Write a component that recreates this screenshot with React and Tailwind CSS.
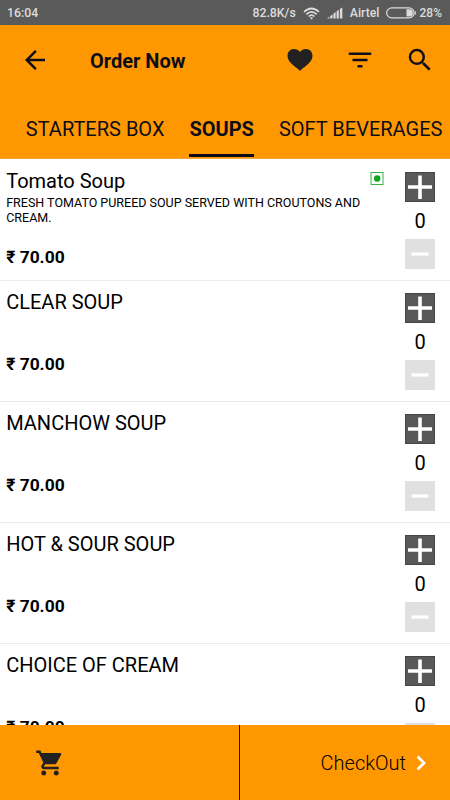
import React from 'react'
import {
  MdArrowBack,
  MdFilterList,
  MdSearch,
  MdShoppingCart,
} from 'react-icons/md'

const tabs = [
  { name: 'STARTERS BOX' },
  { name: 'SOUPS', active: true },
  { name: 'SOFT BEVERAGES' },
]

const items = [
  {
    name: 'Tomato Soup',
    description: 'FRESH TOMATO PUREED SOUP SERVED WITH CROUTONS AND CREAM.',
    price: '70.00',
    veg: true,
  },
  { name: 'CLEAR SOUP', price: '70.00' },
  { name: 'MANCHOW SOUP', price: '70.00' },
  { name: 'HOT & SOUR SOUP', price: '70.00' },
  { name: 'CHOICE OF CREAM', price: '70.00' },
]

const StatusBar = () => {
  return (
    <div className="h-[25px] shrink-0 bg-[#5a5a5a] border-b border-[#4a5a60] text-[#dcdcdc] text-[12.3px] font-medium flex items-center pl-[7px] pr-[8px] pt-[2px] leading-none">
      <span>16:04</span>
      <span className="ml-auto">82.8K/s</span>
      <svg className="ml-[7px]" width="17" height="13" viewBox="0 0 17 13" fill="none" stroke="#dcdcdc" strokeWidth="1.7">
        <path d="M1 5 Q8.5 -2 16 5" />
        <path d="M3.3 7.3 Q8.5 2.5 13.7 7.3" />
        <path d="M5.6 9.5 Q8.5 6.8 11.4 9.5" />
        <path d="M8.5 12.6 L6.8 10.8 Q8.5 9.6 10.2 10.8 Z" fill="#dcdcdc" stroke="none" />
      </svg>
      <svg className="ml-[7px]" width="16" height="12" viewBox="0 0 16 12" fill="#dcdcdc">
        <path d="M0 11.5 L2.4 9.7 V11.5 Z" />
        <path d="M3.3 11.5 V9 L5.5 7.4 V11.5 Z" />
        <path d="M6.4 11.5 V6.7 L8.6 5.1 V11.5 Z" />
        <path d="M9.6 11.5 V4.4 L11.8 2.8 V11.5 Z" />
        <path d="M12.9 11.5 V2 L15.3 0.6 V11.5 Z" />
      </svg>
      <span className="ml-[7px]">Airtel</span>
      <svg className="ml-[6px]" width="31" height="12" viewBox="0 0 31 12">
        <rect x="0.7" y="0.9" width="27.4" height="10" rx="5" fill="none" stroke="#dcdcdc" strokeWidth="1.2" />
        <path d="M20.5 2.2 H23.2 A3.7 3.7 0 0 1 23.2 9.6 H20.5 Z" fill="#dcdcdc" />
        <path d="M28.8 3.5 Q31.2 6 28.8 8.5 Z" fill="#dcdcdc" />
      </svg>
      <span className="ml-[3px] text-[12px]">28%</span>
    </div>
  )
}

const Header = () => {
  return (
    <div className="h-[70px] shrink-0 flex items-center pl-[20px] pr-[15px]">
      <MdArrowBack size={30} />
      <h1 className="ml-[40px] pt-px text-[20px] font-bold">Order Now</h1>
      <div className="ml-auto flex gap-[30px]">
        <svg width="30" height="30" viewBox="0 0 30 30" fill="#212121">
          <path d="M15 26 C12 22 2.5 18 2.5 10.9 C2.5 6.9 5.2 4 8.8 4 C11.6 4 13.8 5.2 15 6.9 C16.2 5.2 18.4 4 21.2 4 C24.8 4 27.5 6.9 27.5 10.9 C27.5 18 18 22 15 26 Z" />
        </svg>
        <MdFilterList size={30} />
        <MdSearch size={30} />
      </div>
    </div>
  )
}

const Tabs = () => {
  return (
    <div className="h-[64px] shrink-0 flex pl-[25.8px] gap-[25px] whitespace-nowrap overflow-hidden border-b border-[#f5a63a]">
      {tabs.map((tab) => (
        <div key={tab.name} className="flex flex-col shrink-0">
          <span className={tab.active ? 'pt-[20px] h-[59px] text-[20px] leading-[28px] font-bold' : 'pt-[20px] h-[59px] text-[20px] leading-[28px]'}>
            {tab.name}
          </span>
          {tab.active && <div className="h-[3px] bg-[#0d0d1a]" />}
        </div>
      ))}
    </div>
  )
}

const Quantity = () => {
  return (
    <div className="w-[30px] flex flex-col items-center">
      <button className="block">
        <svg width="30" height="30" viewBox="0 0 30 30">
          <rect x="0.5" y="0.5" width="29" height="29" fill="#595959" stroke="#454545" />
          <path d="M15 3.5 V27 M3 15 H27" stroke="#fff" strokeWidth="3.6" />
        </svg>
      </button>
      <span className="h-[37px] leading-[38px] text-[20px]">0</span>
      <button className="block">
        <svg width="30" height="30" viewBox="0 0 30 30">
          <rect width="30" height="30" fill="#e0e0e0" />
          <path d="M6.5 15 H23.5" stroke="#fff" strokeWidth="3.2" />
        </svg>
      </button>
    </div>
  )
}

const MenuItem = ({ item }) => {
  return (
    <div className="h-[121.1px] shrink-0 border-b border-[#ebebeb] pl-[6.2px] pr-[15px] pt-[12px] flex">
      <div className="w-[364px] flex flex-col -mt-[4px]">
        <h2 className="text-[20px] leading-[26px]">{item.name}</h2>
        {item.description && (
          <p className="text-[12.5px] leading-[15px] mt-px">{item.description}</p>
        )}
        <p className={item.description ? 'mt-[20px] text-[17.4px] leading-[24px] font-bold' : 'mt-[37px] text-[17.4px] leading-[24px] font-bold'}>
          ₹ {item.price}
        </p>
      </div>
      <div className="w-[14px] -mt-px">
        {item.veg && (
          <svg width="14" height="14" viewBox="0 0 14 14">
            <rect x="1" y="1.5" width="12" height="12" fill="#fff" stroke="#35b544" />
            <circle cx="7.2" cy="7.5" r="3.2" fill="#0ca51c" />
          </svg>
        )}
      </div>
      <div className="ml-auto">
        <Quantity />
      </div>
    </div>
  )
}

const BottomBar = () => {
  return (
    <div className="h-[75px] shrink-0 bg-[#ff9800] flex">
      <div className="w-[240px] border-r border-[#1f1a10] flex items-center pl-[34.5px]">
        <MdShoppingCart size={30} className="text-[#212121]" />
      </div>
      <div className="flex-1 flex items-center justify-end pr-[14px]">
        <span className="pt-px text-[20px] font-light">CheckOut</span>
        <svg width="30" height="30" viewBox="0 0 30 30" fill="none" stroke="#fff" strokeWidth="2.8">
          <path d="M11.6 8.6 L18 15 L11.6 21.4" />
        </svg>
      </div>
    </div>
  )
}

const App = () => {
  return (
    <div className="w-[450px] h-[800px] overflow-hidden bg-white text-black flex flex-col font-[Roboto,sans-serif]">
      <StatusBar />

      {/* APP BAR WITH CATEGORY TABS */}
      <div className="bg-[#ff9800] text-[#0d0d1a] flex flex-col">
        <Header />
        <Tabs />
      </div>

      {/* MENU LIST */}
      <div className="flex-1 min-h-0 overflow-hidden flex flex-col pt-[0.7px]">
        {items.map((item) => (
          <MenuItem key={item.name} item={item} />
        ))}
      </div>

      <BottomBar />
    </div>
  )
}

export default App
